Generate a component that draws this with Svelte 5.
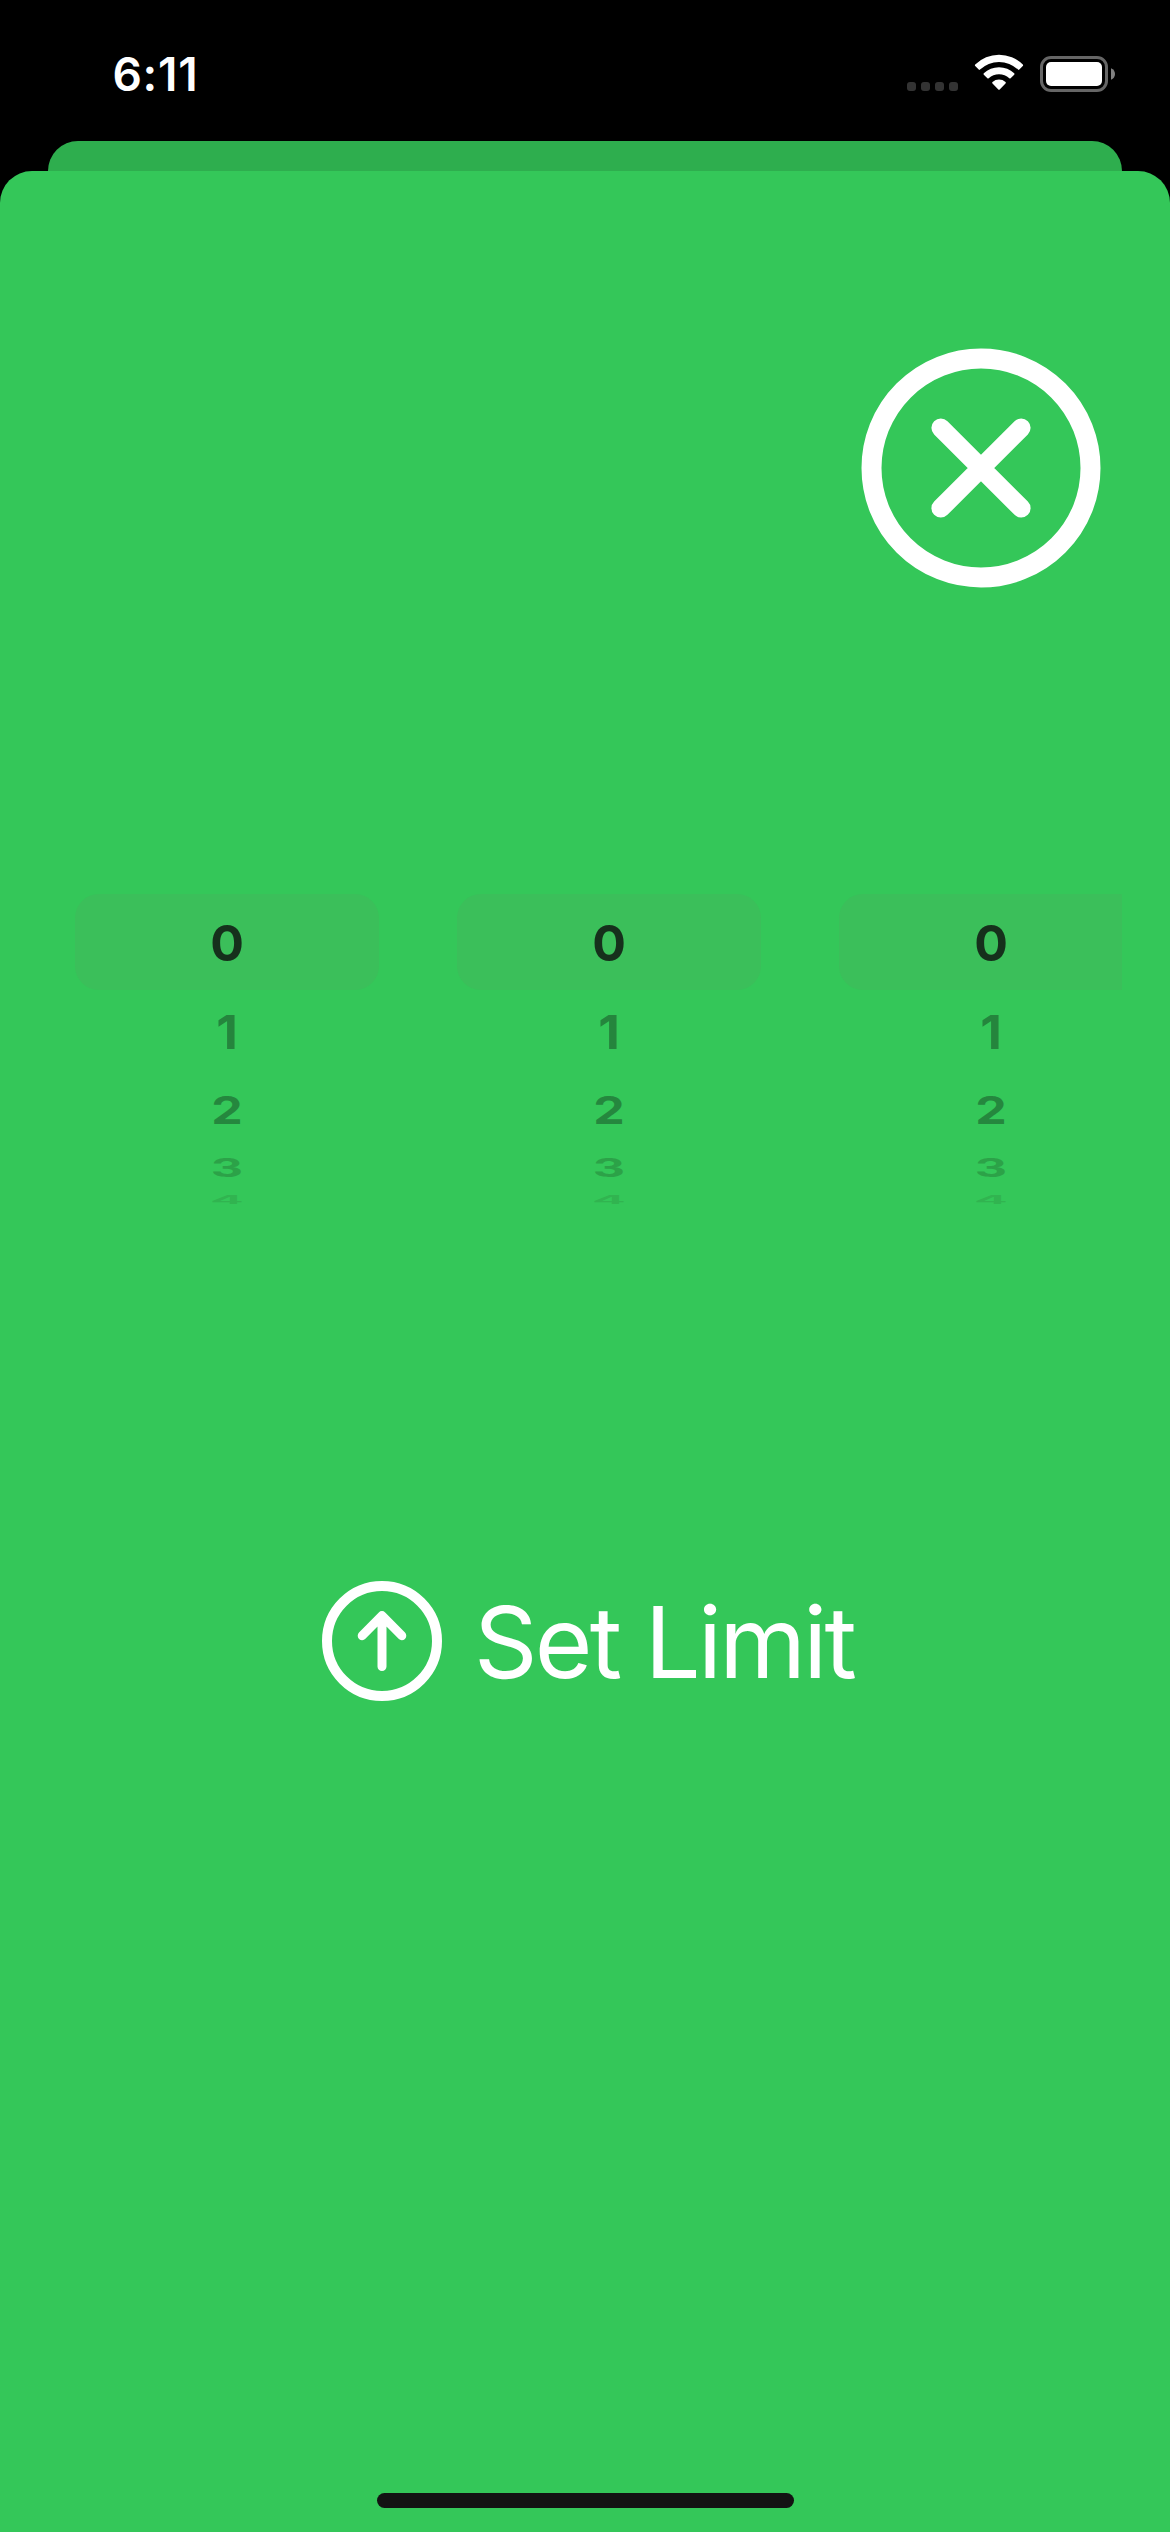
<script>
  // Each wheel row turns further away from the viewer: it gets shorter, flatter and fainter.
  const rows = [
    { value: 1, height: 85, scale: 0.945, color: '#25853d' },
    { value: 2, height: 70, scale: 0.76, color: '#25873e' },
    { value: 3, height: 46.6, scale: 0.5, color: '#2ca248' },
    { value: 4, height: 16.8, scale: 0.225, color: '#31b450' }
  ];
  const wheels = ['hours', 'minutes', 'seconds'];
</script>

<main class="screen">
  <header class="status">
    <span class="time">6:11</span>
    <div class="indicators">
      <div class="cell"><i></i><i></i><i></i><i></i></div>
      <svg class="wifi" width="50" height="38" viewBox="0 0 50 38">
        <g fill="#fff">
          <path d="M1.2 10.6 A33.5 33.5 0 0 1 48.8 10.6 Q49.5 11.3 48.8 12 L45.3 15.6 Q44.7 16.2 44 15.6 A27.3 27.3 0 0 0 6 15.6 Q5.3 16.2 4.7 15.6 L1.2 12 Q.5 11.3 1.2 10.6Z" />
          <path d="M9.8 19.3 A21.8 21.8 0 0 1 40.2 19.3 Q40.9 20 40.2 20.7 L36.6 24.3 Q36 24.9 35.3 24.3 A15.1 15.1 0 0 0 14.7 24.3 Q14 24.9 13.4 24.3 L9.8 20.7 Q9.1 20 9.8 19.3Z" />
          <path d="M18.5 28 A10 10 0 0 1 31.5 28 Q32.3 28.7 31.5 29.5 L25.7 35.5 Q25 36.2 24.3 35.5 L18.5 29.5 Q17.7 28.7 18.5 28Z" />
        </g>
      </svg>
      <svg class="battery" width="75" height="36" viewBox="0 0 75 36">
        <rect x="1.5" y="1.5" width="65" height="33" rx="9.5" fill="none" stroke="#666" stroke-width="3" />
        <rect x="6" y="6" width="56" height="24" rx="5" fill="#fff" />
        <path d="M71 12.2 Q75 14 75 18 T71 23.8Z" fill="#808080" />
      </svg>
    </div>
  </header>

  <div class="back-card"></div>

  <section class="sheet">
    <button class="close" aria-label="Close">
      <svg width="240" height="240" viewBox="-120 -120 240 240" fill="none" stroke="#fff">
        <circle r="109.5" stroke-width="20" />
        <path d="M-40.2 -40.2 L40.2 40.2 M40.2 -40.2 L-40.2 40.2" stroke-width="18.8" stroke-linecap="round" />
      </svg>
    </button>

    <div class="picker">
      {#each wheels as wheel (wheel)}
        <div class="wheel">
          <div class="selected">0</div>
          {#each rows as row (row.value)}
            <div class="row" style="height: {row.height}px; color: {row.color}">
              <span style="transform: scaleY({row.scale})">{row.value}</span>
            </div>
          {/each}
        </div>
      {/each}
    </div>

    <button class="limit">
      <svg width="120" height="120" viewBox="-60 -60 120 120" fill="none" stroke="#fff">
        <circle r="55" stroke-width="10" />
        <path d="M0 25.6 V-25 M-19.8 -5.3 L0 -25.4 L19.8 -5.3" stroke-width="9" stroke-linecap="round" stroke-linejoin="round" />
      </svg>
      <span>Set Limit</span>
    </button>

    <div class="home"></div>
  </section>
</main>

<style>
  :global(body) {
    background: #000;
  }

  .screen {
    display: flex;
    flex-direction: column;
    width: 1170px;
    height: 2532px;
    overflow: hidden;
    background: #000;
    font-family: Inter, 'Liberation Sans', sans-serif;
  }

  .status {
    display: flex;
    flex: none;
    justify-content: space-between;
    box-sizing: border-box;
    height: 141px;
    padding: 54px 55px 0 112.5px;
  }

  .time {
    margin-top: -3px;
    color: #fff;
    font-size: 46px;
    font-weight: 600;
    letter-spacing: 0.7px;
    line-height: 46px;
  }

  .indicators {
    display: flex;
    align-items: flex-start;
  }

  .cell {
    display: flex;
    gap: 5px;
    margin: 28px 16px 0 0;
  }

  .cell i {
    width: 9px;
    height: 9px;
    border-radius: 3px;
    background: #333;
  }

  .wifi {
    margin-right: 16px;
  }

  .battery {
    margin-top: 2px;
  }

  .back-card {
    flex: none;
    height: 30px;
    margin: 0 48.3px;
    border-radius: 30px 30px 0 0;
    background: #2eae4e;
  }

  .sheet {
    display: flex;
    flex: 1;
    flex-direction: column;
    border-radius: 32px 32px 0 0;
    background: #34c759;
  }

  button {
    padding: 0;
    border: 0;
    background: none;
    font: inherit;
  }

  svg {
    display: block;
  }

  .close {
    align-self: flex-end;
    margin: 177.3px 69.5px 0 0;
  }

  .picker {
    display: flex;
    gap: 78px;
    height: 316px;
    margin: 305.7px 48px 0 75px;
    overflow: hidden;
  }

  .wheel {
    flex: none;
    width: 304px;
    font-size: 50px;
    font-weight: 700;
    text-align: center;
  }

  .selected {
    height: 96px;
    border-radius: 24px;
    background: #3bbf5a;
    color: #16301c;
    line-height: 98px;
  }

  .row {
    display: flex;
    align-items: center;
    justify-content: center;
  }

  .row span {
    flex: none;
    line-height: 50px;
  }

  .limit {
    display: flex;
    align-items: center;
    margin: 371px 0 0 322px;
    color: #fff;
  }

  .limit span {
    margin-left: 32px;
    padding-top: 1px;
    font-size: 99px;
    letter-spacing: -2.7px;
    line-height: 120px;
    white-space: nowrap;
  }

  .home {
    width: 417px;
    height: 15px;
    margin: auto auto 24px 377px;
    border-radius: 8px;
    background: #131313;
  }
</style>
